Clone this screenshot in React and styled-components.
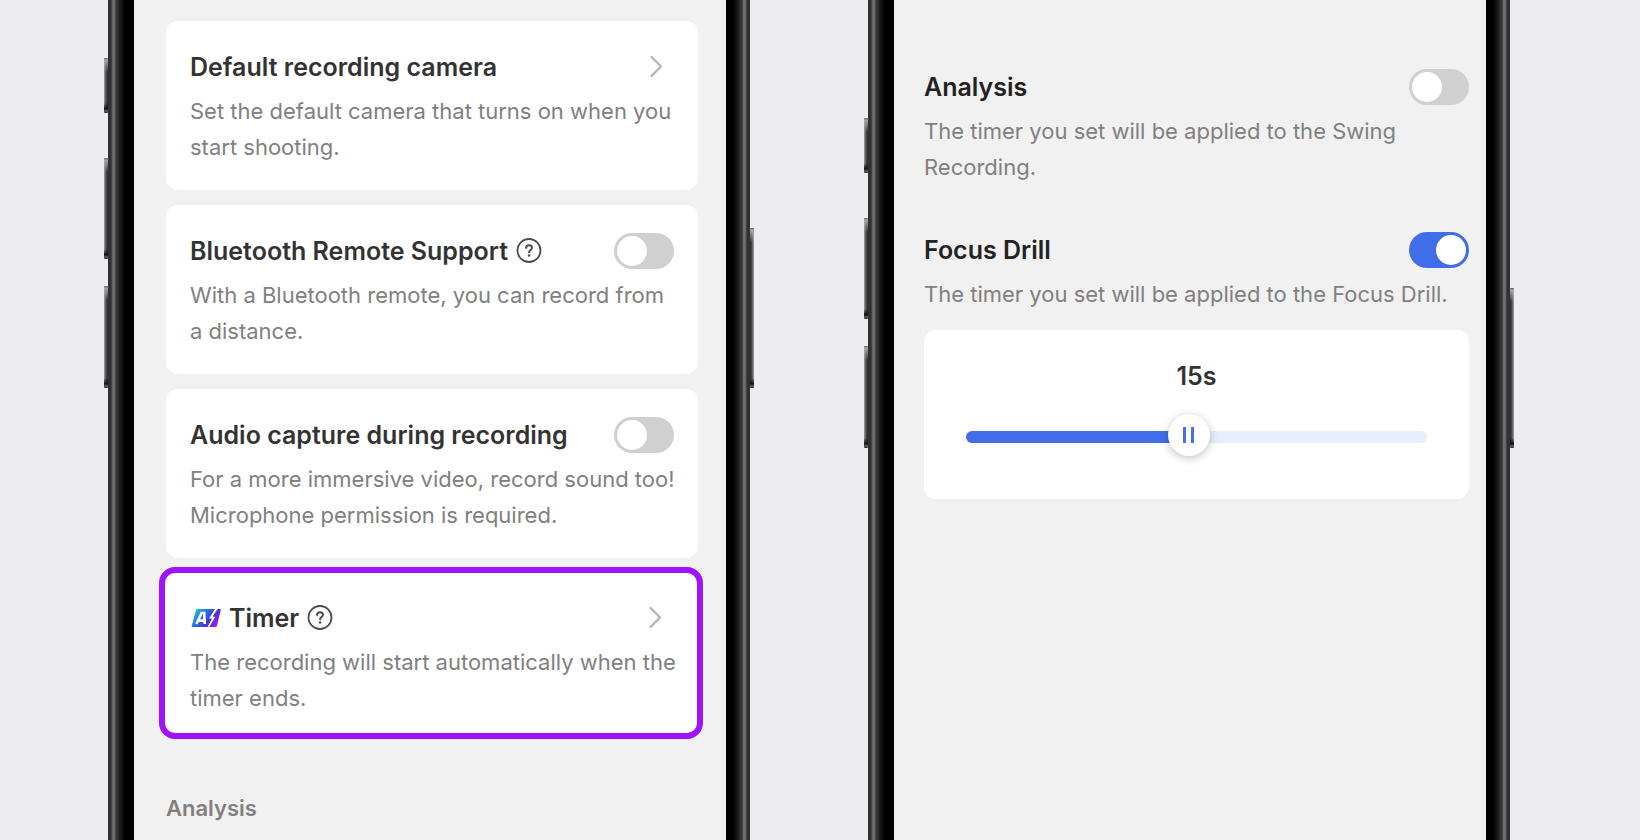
import React, { useState } from 'react';
import styled, { createGlobalStyle, css } from 'styled-components';

const GlobalStyle = createGlobalStyle`
  * {
    box-sizing: border-box;
  }

  body {
    margin: 0;
    background: #ededef;
    font-family: Inter, 'Liberation Sans', sans-serif;
    color: #333;
  }

  h2, h3, p {
    margin: 0;
  }
`;

const ChevronIcon = () => (
  <svg width="36" height="36" viewBox="0 0 36 36" fill="none" aria-hidden="true">
    <path d="M13.5 8L23 17.5L13.5 27" stroke="#b5b5b5" strokeWidth="2.4" strokeLinecap="round" strokeLinejoin="round" />
  </svg>
);

const HelpIcon = () => (
  <svg width="26" height="26" viewBox="0 0 26 26" fill="none" stroke="#4d4d4d" strokeLinecap="round" aria-hidden="true">
    <circle cx="13" cy="12.5" r="11.5" strokeWidth="1.8" />
    <path d="M10 9.9C10.1 8.2 11.3 7.3 13 7.3C14.8 7.3 16 8.3 16 9.8C16 12 13.1 12 13.1 14.3" strokeWidth="2" />
    <circle cx="13.1" cy="17.5" r="1.3" fill="#4d4d4d" stroke="none" />
  </svg>
);

const AiIcon = () => (
  <svg width="31" height="20" viewBox="-1 0 31 20" aria-hidden="true">
    <defs>
      <linearGradient id="ai-fill" x1="4" y1="0" x2="26" y2="20" gradientUnits="userSpaceOnUse">
        <stop offset="0" stopColor="#19d3c5" />
        <stop offset="0.4" stopColor="#2b6be0" />
        <stop offset="0.65" stopColor="#4a2fd8" />
        <stop offset="1" stopColor="#b01cf4" />
      </linearGradient>
    </defs>
    <path d="M6.5 1H24L18 10.4H21L16.6 19H1.4Q0.4 19 0.7 18L5 2.1Q5.4 1 6.5 1Z" fill="url(#ai-fill)" />
    <path d="M28.3 1H29Q30 1 29.7 2L26 17.9Q25.6 19 24.6 19H18.2L24.3 8.8H21.4L26.6 1Z" fill="url(#ai-fill)" />
    <path d="M5.4 16L10.6 5H13.2L13.8 16M8.1 12.6H13.5" fill="none" stroke="#fff" strokeWidth="2.6" />
  </svg>
);

const Switch = ({ id, label, defaultChecked }) => (
  <SwitchInput id={id} type="checkbox" role="switch" aria-label={label} defaultChecked={defaultChecked} />
);

const SettingsPhone = () => (
  <Phone>
    <SideButton $side="left" $top={58} $height={55} />
    <SideButton $side="left" $top={158} $height={101} />
    <SideButton $side="left" $top={286} $height={102} />
    <SideButton $side="right" $top={228} $height={160} />
    <Rail />
    <SettingsScreen>
      <CardList>
        <Card>
          <Row>
            <Title>Default recording camera</Title>
            <IconButton $push aria-label="Open default recording camera">
              <ChevronIcon />
            </IconButton>
          </Row>
          <Description>Set the default camera that turns on when you start shooting.</Description>
        </Card>
        <Card>
          <Row>
            <Title>Bluetooth Remote Support</Title>
            <IconButton aria-label="About Bluetooth remote support">
              <HelpIcon />
            </IconButton>
            <Switch id="bluetooth" label="Bluetooth Remote Support" />
          </Row>
          <Description>With a Bluetooth remote, you can record from a distance.</Description>
        </Card>
        <Card>
          <Row>
            <Title>Audio capture during recording</Title>
            <Switch id="audio" label="Audio capture during recording" />
          </Row>
          <Description>For a more immersive video, record sound too! Microphone permission is required.</Description>
        </Card>
        <HighlightedCard>
          <Row>
            <AiIcon />
            <Title>Timer</Title>
            <IconButton aria-label="About the timer">
              <HelpIcon />
            </IconButton>
            <IconButton $push aria-label="Open timer">
              <ChevronIcon />
            </IconButton>
          </Row>
          <Description>The recording will start automatically when the timer ends.</Description>
        </HighlightedCard>
      </CardList>
      <SectionTitle>Analysis</SectionTitle>
    </SettingsScreen>
    <Rail $right />
  </Phone>
);

const TimerPhone = () => {
  const [seconds, setSeconds] = useState(15);
  const fill = ((seconds - 1) / 29) * 100;

  return (
    <Phone>
      <SideButton $side="left" $top={118} $height={55} />
      <SideButton $side="left" $top={218} $height={101} />
      <SideButton $side="left" $top={346} $height={102} />
      <SideButton $side="right" $top={288} $height={160} />
      <Rail />
      <TimerScreen>
        <section>
          <Row>
            <Title $dark>Analysis</Title>
            <Switch id="analysis" label="Analysis" />
          </Row>
          <Description $inset>The timer you set will be applied to the Swing Recording.</Description>
        </section>
        <section>
          <Row>
            <Title $dark>Focus Drill</Title>
            <Switch id="focus-drill" label="Focus Drill" defaultChecked />
          </Row>
          <Description>The timer you set will be applied to the Focus Drill.</Description>
          <SliderCard>
            <SliderValue htmlFor="seconds">{seconds}s</SliderValue>
            <Slider
              id="seconds"
              type="range"
              min="1"
              max="30"
              value={seconds}
              onChange={(e) => setSeconds(Number(e.target.value))}
              style={{ '--fill': `${fill}%` }}
            />
          </SliderCard>
        </section>
      </TimerScreen>
      <Rail $right />
    </Phone>
  );
};

const App = () => (
  <>
    <GlobalStyle />
    <Stage>
      <SettingsPhone />
      <TimerPhone />
    </Stage>
  </>
);

const Stage = styled.main`
  min-height: 100vh;
  display: flex;
  gap: 118px;
  padding: 0 130px 0 108px;
`;

const Phone = styled.div`
  position: relative;
  flex: 1;
  min-width: 0;
  display: flex;
`;

const Rail = styled.div`
  flex: none;
  width: ${({ $right }) => ($right ? '24px' : '26px')};
  background: linear-gradient(
    ${({ $right }) => ($right ? 'to left' : 'to right')},
    #303133 0,
    #303133 3px,
    #555 4px,
    #737373 5px,
    #686868 7px,
    #2a2a2a 8px,
    #3a3a3a 9px,
    #222 11px,
    #101010 14px,
    #000 17px
  );
`;

/* Hardware keys that stick out of the frame. */
const SideButton = styled.span`
  position: absolute;
  top: ${({ $top }) => $top}px;
  ${({ $side }) => $side}: -4px;
  width: 4px;
  height: ${({ $height }) => $height}px;
  border-radius: 1px;
  background:
    linear-gradient(to bottom, #555 0, #aaa 2px, transparent 14px, transparent calc(100% - 10px), #111 calc(100% - 4px), #666 calc(100% - 2px), #222 100%),
    linear-gradient(${({ $side }) => ($side === 'left' ? 'to right' : 'to left')}, #a0a0a0, #777 1px, #333 3px);
`;

const screen = css`
  flex: 1;
  min-width: 0;
  background: #f1f1f1;
`;

const SettingsScreen = styled.div`
  ${screen}
  padding: 21px 28px 12px 32px;
`;

const TimerScreen = styled.div`
  ${screen}
  display: flex;
  flex-direction: column;
  gap: 46px;
  padding: 69px 17px 24px 30px;
`;

const CardList = styled.div`
  display: flex;
  flex-direction: column;
  gap: 15px;
`;

const Card = styled.section`
  padding: 28px 24px 24px;
  border-radius: 12px;
  background: #fff;
`;

const HighlightedCard = styled(Card)`
  margin: -6px -5px 0 -7px;
  padding: 27px 24px 16px 25px;
  border: 6px solid #a012fa;
  border-radius: 16px;
`;

const Row = styled.div`
  display: flex;
  align-items: center;
  gap: 8px;
  height: 36px;
`;

const Title = styled.h2`
  font-size: 25px;
  font-weight: 600;
  line-height: 36px;
  color: ${({ $dark }) => ($dark ? '#222' : '#333')};
  white-space: nowrap;
`;

const Description = styled.p`
  margin: 8px -4px 1px 0;
  font-size: 22px;
  font-weight: 400;
  line-height: 36px;
  color: #808080;
  ${({ $inset }) => $inset && 'padding-right: 64px;'}
`;

const SectionTitle = styled.h3`
  margin-top: 51px;
  font-size: 22px;
  font-weight: 600;
  line-height: 36px;
  color: #808080;
`;

const IconButton = styled.button`
  display: flex;
  padding: 0;
  border: 0;
  background: none;
  cursor: pointer;
  ${({ $push }) => $push && 'margin-left: auto;'}
`;

const SwitchInput = styled.input`
  appearance: none;
  flex: none;
  width: 60px;
  height: 36px;
  margin: 0 0 0 auto;
  padding: 3px;
  display: flex;
  border-radius: 18px;
  background: #d0d0d0;
  cursor: pointer;

  &::before {
    content: '';
    width: 30px;
    height: 30px;
    border-radius: 50%;
    background: #fff;
  }

  &:checked {
    justify-content: flex-end;
    background: #406ee8;
  }
`;

const SliderCard = styled.div`
  display: flex;
  flex-direction: column;
  align-items: center;
  gap: 22px;
  margin-top: 18px;
  padding: 28px 42px 41px;
  border-radius: 12px;
  background: #fff;
`;

const SliderValue = styled.label`
  font-size: 25px;
  font-weight: 600;
  line-height: 36px;
`;

const Slider = styled.input`
  appearance: none;
  width: 100%;
  height: 42px;
  margin: 0;
  background: none;
  cursor: pointer;

  &::-webkit-slider-runnable-track {
    height: 12px;
    border-radius: 6px;
    background: linear-gradient(to right, #406ee8 var(--fill), #e5effe var(--fill));
  }

  &::-webkit-slider-thumb {
    appearance: none;
    width: 42px;
    height: 42px;
    margin-top: -17px;
    border-radius: 50%;
    background:
      linear-gradient(#4a6fe0, #4a6fe0) 15px 13px / 3px 16px no-repeat,
      linear-gradient(#4a6fe0, #4a6fe0) 23px 13px / 3px 16px no-repeat,
      #fff;
    box-shadow: 0 2px 8px rgba(0, 0, 0, 0.25);
  }
`;

export default App;
